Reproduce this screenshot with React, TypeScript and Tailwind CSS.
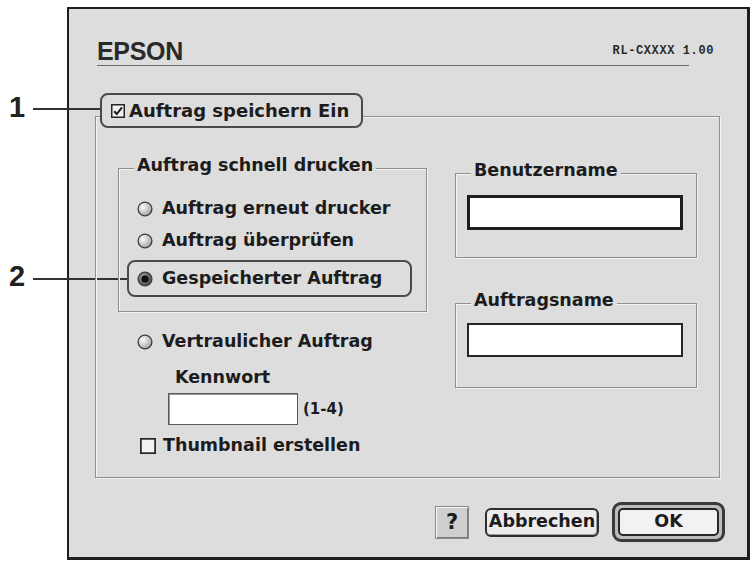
import React from "react";

const ui = "font-['DejaVu_Sans',sans-serif] font-bold text-[#1c1c1c]";

const CheckBox = ({ checked, size = 14 }: { checked: boolean; size?: number }) => (
    <svg width={size} height={size} viewBox="0 0 14 14" className="shrink-0">
        <rect x="0.75" y="0.75" width="12.5" height="12.5" fill="#f2f2f2" stroke="#262626" strokeWidth="1.5" />
        {checked && (
            <path d="M3.2 7.2 L5.8 10 L11 3.4" fill="none" stroke="#1a1a1a" strokeWidth="2" />
        )}
    </svg>
);

const Radio = ({ checked, id }: { checked: boolean; id: string }) => (
    <svg width="16" height="16" viewBox="0 0 16 16" className="shrink-0">
        <defs>
            <radialGradient id={id} cx="0.35" cy="0.35" r="0.7">
                <stop offset="0" stopColor={checked ? "#9a9a9a" : "#ffffff"} />
                <stop offset="1" stopColor={checked ? "#4a4a4a" : "#a0a0a0"} />
            </radialGradient>
        </defs>
        <circle cx="8" cy="8" r="6.9" fill={`url(#${id})`} stroke="#3c3c3c" strokeWidth="1.3" />
        {checked && <circle cx="8" cy="8" r="3.6" fill="#0f0f0f" />}
    </svg>
);

const RadioRow = ({ label, checked = false, id }: { label: string; checked?: boolean; id: string }) => (
    <div className="flex items-center gap-[9px] h-[24px]">
        <Radio checked={checked} id={id} />
        <span className="text-[17.5px] leading-none">{label}</span>
    </div>
);

const GroupBox = ({ label, children, className }: { label: string; children: React.ReactNode; className: string }) => (
    <div className={`relative border border-[#8e8e8e] shadow-[1px_1px_0_#f4f4f4,inset_1px_1px_0_#f4f4f4] ${className}`}>
        <span className="absolute left-[15px] top-[-14px] h-[20px] px-[3px] bg-[#dddddd] text-[17.5px] leading-[20px]">
            {label}
        </span>
        {children}
    </div>
);

export default function App() {
    return (
        <div className={`relative w-[754px] h-[562px] bg-white pl-[67px] pt-[7px] overflow-hidden ${ui}`}>
            {/* callouts */}
            <span className="absolute left-[9px] top-[93px] font-['Liberation_Sans',sans-serif] text-[29px] leading-[29px] text-[#222]">1</span>
            <div className="absolute left-[33px] top-[108px] w-[68px] h-[2px] bg-[#333]" />
            <span className="absolute left-[9px] top-[262px] font-['Liberation_Sans',sans-serif] text-[29px] leading-[29px] text-[#222]">2</span>
            <div className="absolute left-[33px] top-[278px] w-[95px] h-[2px] bg-[#333]" />

            <div className="w-[683px] h-[553px] bg-[#dddddd] border-l-2 border-t-2 border-r-[3px] border-b-[3px] border-[#1e1e1e]">
                <div className="flex justify-between items-start pl-[28px] pr-[33px] pt-[28px]">
                    <span className="font-['Liberation_Sans',sans-serif] text-[25px] leading-[28px] tracking-[-0.3px] text-[#2a2a2a]">
                        EPSON
                    </span>
                    <span className="mt-[8px] font-['Liberation_Mono',monospace] text-[12px] leading-[13px] tracking-[0.6px] text-[#2a2a2a]">
                        RL-CXXXX 1.00
                    </span>
                </div>
                <div className="ml-[28px] w-[592px] h-px bg-[#6a6a6a]" />

                <div className="relative ml-[26px] mt-[50px] w-[625px] h-[362px] border border-[#8e8e8e] shadow-[1px_1px_0_#f4f4f4,inset_1px_1px_0_#f4f4f4] flex pl-[22px] pt-[51px] gap-[28px]">
                    <div className="absolute left-[4px] top-[-24px] w-[263px] h-[35px] rounded-[8px] border-2 border-[#4a4a4a] bg-[#dddddd] flex items-center gap-[4px] pl-[9px]">
                        <CheckBox checked />
                        <span className="text-[18px] leading-none">Auftrag speichern Ein</span>
                    </div>

                    <div className="w-[309px] flex flex-col">
                        <GroupBox label="Auftrag schnell drucken" className="h-[144px] pt-[28px] flex flex-col">
                            <div className="pl-[18px]">
                                <RadioRow label="Auftrag erneut drucker" id="r1" />
                            </div>
                            <div className="pl-[18px] mt-[8px]">
                                <RadioRow label="Auftrag überprüfen" id="r2" />
                            </div>
                            <div className="ml-[8px] mt-[7px] w-[285px] h-[37px] rounded-[8px] border-2 border-[#4a4a4a] flex items-center pl-[8px]">
                                <RadioRow label="Gespeicherter Auftrag" checked id="r3" />
                            </div>
                        </GroupBox>

                        <div className="pl-[19px] mt-[18px]">
                            <RadioRow label="Vertraulicher Auftrag" id="r4" />
                        </div>
                        <div className="pl-[57px] mt-[13px] h-[20px] text-[17.5px] leading-[20px]">Kennwort</div>
                        <div className="pl-[50px] mt-[6px] flex items-center gap-[5px]">
                            <div className="w-[130px] h-[32px] bg-white border border-[#5a5a5a] shadow-[inset_1px_1px_0_#9a9a9a]" />
                            <span className="text-[15px] leading-none">(1-4)</span>
                        </div>
                        <div className="pl-[22px] mt-[9px] h-[24px] flex items-center gap-[7px]">
                            <CheckBox checked={false} size={16} />
                            <span className="text-[17.5px] leading-none">Thumbnail erstellen</span>
                        </div>
                    </div>

                    <div className="w-[242px] pt-[5px] flex flex-col">
                        <GroupBox label="Benutzername" className="h-[85px] pl-[11px] pt-[21px]">
                            <div className="w-[216px] h-[35px] bg-white border-[3px] border-[#1e1e1e]" />
                        </GroupBox>
                        <GroupBox label="Auftragsname" className="mt-[45px] h-[85px] pl-[11px] pt-[19px]">
                            <div className="w-[216px] h-[34px] bg-white border-[2.5px] border-[#262626]" />
                        </GroupBox>
                    </div>
                </div>

                <div className="mt-[24px] pr-[22px] flex justify-end items-center h-[40px]">
                    <div className="w-[34px] h-[33px] flex items-center justify-center bg-[#cfcfcf] border border-[#8a8a8a] shadow-[inset_1px_1px_0_#f6f6f6,inset_-1px_-1px_0_#7a7a7a] text-[21px] leading-none">
                        ?
                    </div>
                    <div className="ml-[16px] w-[114px] h-[29px] flex items-center justify-center rounded-[6px] border-2 border-[#2e2e2e] bg-[#ececec] shadow-[inset_-1px_-1px_0_#a0a0a0] text-[17.5px] leading-none">
                        Abbrechen
                    </div>
                    <div className="ml-[13px] w-[113px] h-[40px] rounded-[9px] border-[3px] border-[#3a3a3a] bg-[#bdbdbd] p-[3px]">
                        <div className="h-full rounded-[5px] border-2 border-[#262626] bg-[#f2f2f2] flex items-center justify-center text-[17.5px] leading-none">
                            OK
                        </div>
                    </div>
                </div>
            </div>
        </div>
    );
}
